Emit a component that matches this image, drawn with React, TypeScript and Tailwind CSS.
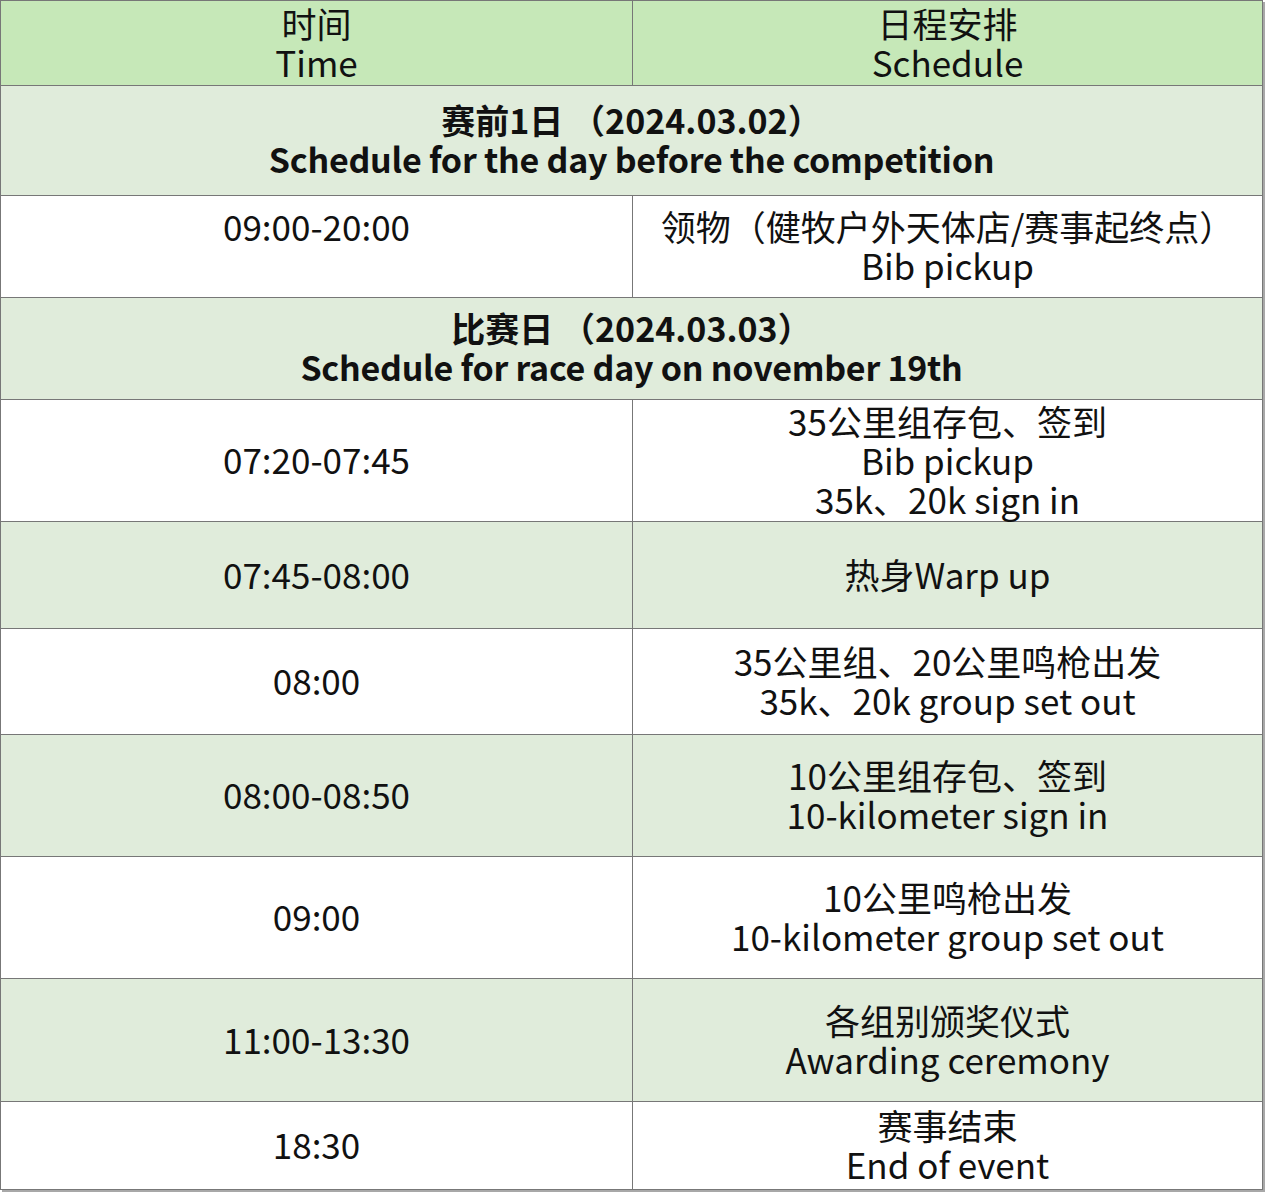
import React from 'react'

const font = { fontFamily: '"Noto Sans CJK SC", "Noto Sans", sans-serif' }

type Row =
  | { kind: 'section'; h: string; lines: string[] }
  | { kind: 'row'; h: string; bg: string; time: string; lines: string[]; timeTop?: boolean }

const rows: Row[] = [
  { kind: 'section', h: 'h-[110px]', lines: ['赛前1日 （2024.03.02）', 'Schedule for the day before the competition'] },
  { kind: 'row', h: 'h-[102px]', bg: 'bg-white', time: '09:00-20:00', lines: ['领物（健牧户外天体店/赛事起终点）', 'Bib pickup'], timeTop: true },
  { kind: 'section', h: 'h-[102px]', lines: ['比赛日 （2024.03.03）', 'Schedule for race day on november 19th'] },
  { kind: 'row', h: 'h-[122px]', bg: 'bg-white', time: '07:20-07:45', lines: ['35公里组存包、签到', 'Bib pickup', '35k、20k sign in'] },
  { kind: 'row', h: 'h-[107px]', bg: 'bg-[#e0ecdb]', time: '07:45-08:00', lines: ['热身Warp up'] },
  { kind: 'row', h: 'h-[106px]', bg: 'bg-white', time: '08:00', lines: ['35公里组、20公里鸣枪出发', '35k、20k group set out'] },
  { kind: 'row', h: 'h-[122px]', bg: 'bg-[#e0ecdb]', time: '08:00-08:50', lines: ['10公里组存包、签到', '10-kilometer sign in'] },
  { kind: 'row', h: 'h-[122px]', bg: 'bg-white', time: '09:00', lines: ['10公里鸣枪出发', '10-kilometer group set out'] },
  { kind: 'row', h: 'h-[123px]', bg: 'bg-[#e0ecdb]', time: '11:00-13:30', lines: ['各组别颁奖仪式', 'Awarding ceremony'] },
  { kind: 'row', h: 'h-[87px]', bg: 'bg-white', time: '18:30', lines: ['赛事结束', 'End of event'] },
]

export default function App() {
  return (
    <div className="min-h-screen bg-white" style={font}>
      <div className="w-[1263px] border border-[#777] text-[#111] text-[35px] leading-[39px] shadow-[2px_2px_0_#a8a8a8]">
        {/* header */}
        <div className="flex h-[85px] border-b border-[#777] bg-[#c6e8b8]">
          <div className="flex w-[632px] flex-col items-center justify-center border-r border-[#777] pb-[3px]">
            <span>时间</span>
            <span>Time</span>
          </div>
          <div className="flex flex-1 flex-col items-center justify-center pb-[3px]">
            <span>日程安排</span>
            <span>Schedule</span>
          </div>
        </div>

        {rows.map((r, i) =>
          r.kind === 'section' ? (
            <div
              key={i}
              className={`flex flex-col items-center justify-center border-b border-[#777] bg-[#e0ecdb] pb-[4px] text-[34px] font-bold ${r.h}`}
            >
              <span>{r.lines[0]}</span>
              <span className="tracking-[-0.25px]">{r.lines[1]}</span>
            </div>
          ) : (
            <div key={i} className={`flex border-b border-[#777] last:border-b-0 ${r.bg} ${r.h}`}>
              <div
                className={`flex w-[632px] items-center justify-center border-r border-[#777] ${r.timeTop ? 'pb-[42px]' : 'pb-[4px]'}`}
              >
                {r.time}
              </div>
              <div className="flex flex-1 flex-col items-center justify-center pb-[3px]">
                {r.lines.map((l) => (
                  <span key={l}>{l}</span>
                ))}
              </div>
            </div>
          )
        )}
      </div>
    </div>
  )
}
